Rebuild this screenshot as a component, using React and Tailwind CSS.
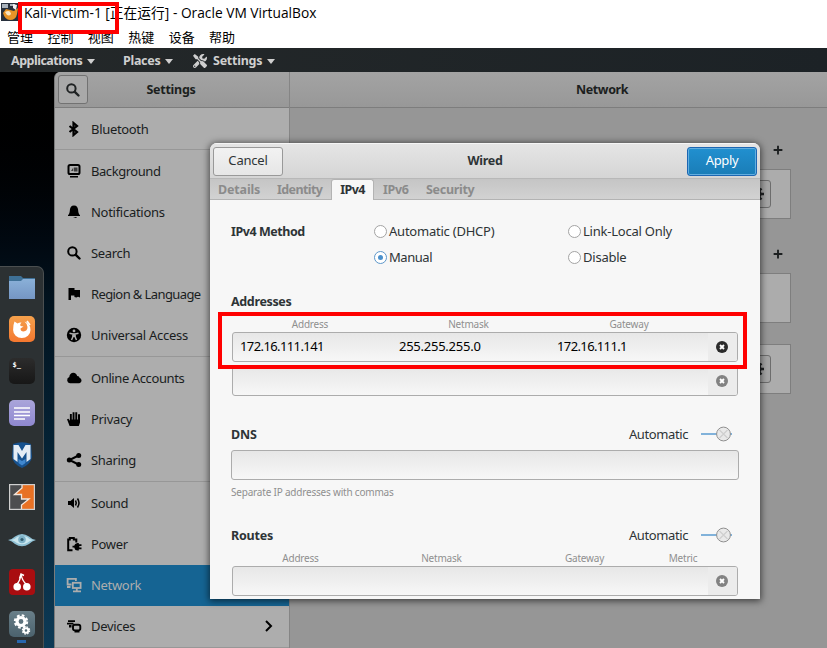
import React from "react";
import { FaTools } from "react-icons/fa";

const I = ({ children, size = "h-4 w-4" }) => (
  <svg viewBox="0 0 16 16" className={`${size} shrink-0`} fill="currentColor">{children}</svg>
);

const line = { fill: "none", stroke: "currentColor" };

const BluetoothIcon = () => <I><path {...line} strokeWidth="2.200" d="M3.500 5 11 11 7.500 14V2L11 5 3.500 11" /></I>;
const BackgroundIcon = () => (
  <I><rect {...line} strokeWidth="2" x="2.5" y="2" width="11" height="9" rx="1.6" /><path d="M5 8 7.3 4.5V8zM8 4.5h3.5V8.5H8z" opacity=".65" /><path d="M4 13h8v1.500H4z" /></I>
);
const BellIcon = () => <I><path d="M8 1.500c-2.7 0-3.9 2-4.1 4.3C3.7 8.5 3.4 10 2 11.3V12h12v-.7c-1.4-1.3-1.7-2.8-1.9-5.5C11.9 3.5 10.7 1.5 8 1.5zM7 13h4l-1 1z" /></I>;
const SearchIcon = () => <I><circle {...line} strokeWidth="2" cx="6.4" cy="6.4" r="4.2" /><path {...line} strokeWidth="2.4" strokeLinecap="round" d="m9.8 9.8 3.7 3.7" /></I>;
const FlagIcon = () => <I><path d="M2.5 2h6v2H14v7.5l-2-.7-1.6.7-2-.5V9.5H5V14H2.5z" /></I>;
const AccessIcon = () => (
  <I><circle cx="8" cy="8" r="7.2" /><circle cx="8" cy="3.9" r="1.4" fill="#adadad" /><path d="M3.500 6.200 8 7.200l4.500-1M7 7v2.500L5.500 13M9 7v2.500l1.500 3.500" fill="none" stroke="#adadad" strokeWidth="1.500" /><path d="M6.500 6.500h3v3.500h-3z" fill="#adadad" /></I>
);
const CloudIcon = () => <I><path d="M4 13.200a3.200 3.200 0 0 1-.7-6.200C3.400 4.400 5.200 2.800 7.300 2.800c2 0 3.500 1.300 3.900 3.200 1.500 0 2.300.9 2.400 2.100 1.200.3 1.900 1.300 1.900 2.500 0 1.500-1 2.600-2.500 2.600z" /></I>;
const HandIcon = () => <I><path d="M3.600 15 1 8.300l1.500-.6 1.400 2V3h1.900v5.500h.8V1.300h1.900v7.200h.8V1.300h1.900v7.200h.8V3.300H14V11.500L12.800 15z" /></I>;
const ShareIcon = () => <I><path {...line} strokeWidth="2" d="M12.500 3.500 3.500 8l9 4.500" /><circle cx="3.300" cy="8" r="2.500" /><circle cx="12.700" cy="3.500" r="2.500" /><circle cx="12.700" cy="12.500" r="2.500" /></I>;
const SoundIcon = () => <I><path d="M2 6h2.500L8 3v10L4.500 10H2z" /><path {...line} strokeWidth="1.500" d="M9.500 5.500q1.500 2.500 0 5M11.500 3.500q3 4.500 0 9" /></I>;
const PowerIcon = () => (
  <I><path {...line} strokeWidth="2" d="M6.500 14.200H2.200V3.500h1.600V2h4v1.500h2.500v3" /><path d="M15.500 8.300h-2.700V7H11.500Q8.500 7.500 8.200 9.800H6.500v1.700h1.700q.3 2.500 3.300 3h1.300v-1.300h2.700v-1.700h-2.200V10h2.200z" /></I>
);
const NetworkIcon = () => (
  <I><path {...line} strokeWidth="1.800" d="M5.500 7.500H1.600V1.800h8.300V4M1 10h3.500" /><rect {...line} strokeWidth="1.800" x="6.800" y="5.800" width="7.800" height="5.200" /><path {...line} strokeWidth="1.800" d="M10.800 11v3M7 14.300h8" /></I>
);
const DevicesIcon = () => (
  <I><path {...line} strokeWidth="1.800" d="M2 3.200h7M1 5.600h6.500" /><path d="M3 7h2.500v2.500H3z" /><rect {...line} strokeWidth="1.900" x="7" y="6.800" width="7.300" height="5.600" rx="1.800" /><path d="M8.500 13h5v1.500h-5z" /></I>
);

const groups = [
  { height: "h-[42px]", items: [["Bluetooth", BluetoothIcon]] },
  {
    height: "h-[207px]",
    items: [["Background", BackgroundIcon, "tracking-[-0.45px]"], ["Notifications", BellIcon, "tracking-[-0.28px]"], ["Search", SearchIcon], ["Region & Language", FlagIcon, "tracking-[-0.6px]"], ["Universal Access", AccessIcon, "tracking-[-0.25px]"]],
  },
  { height: "h-[125px]", items: [["Online Accounts", CloudIcon, "tracking-[-0.4px]"], ["Privacy", HandIcon], ["Sharing", ShareIcon]] },
  { height: "h-[166px]", items: [["Sound", SoundIcon, "tracking-[-0.4px]"], ["Power", PowerIcon], ["Network", NetworkIcon], ["Devices", DevicesIcon]] },
];

function Sidebar() {
  return (
    <div className="w-[235px] shrink-0 border-r border-[#858585] bg-[#adadad]">
      <div className="flex h-9 items-center border-b border-[#7d7d7d] bg-linear-to-b from-[#a3a3a3] to-[#989898] pl-[3px]">
        <div className="flex h-[29px] w-[30px] items-center justify-center rounded-[3px] border border-[#727272] bg-[#a9a9a9] text-[#202324]">
          <SearchIcon />
        </div>
        <div className="w-[166px] text-center text-[12.5px] font-bold tracking-[-0.25px]">Settings</div>
      </div>
      {groups.map((g, i) => (
        <div key={i} className={`flex flex-col border-b border-[#979797] ${g.height}`}>
          {g.items.map(([name, Icon, tracking = "tracking-[-0.32px]"]) => (
            <div
              key={name}
              className={`flex flex-1 items-center pl-[11px] ${name === "Network" ? "bg-[#156493] text-[#adadad]" : "text-black"}`}
            >
              <Icon />
              <span className={`ml-[9px] flex-1 whitespace-nowrap ${tracking} ${name === "Network" ? "" : "text-[#1a1d1e]"}`}>{name}</span>
              {name === "Devices" && (
                <svg viewBox="0 0 10 12" className="mr-[15px] h-3 w-[10px]" fill="none" stroke="currentColor" strokeWidth="2"><path d="m2 1 5 5-5 5" /></svg>
              )}
            </div>
          ))}
        </div>
      ))}
    </div>
  );
}

const GearButton = () => (
  <div className="flex h-7 w-[30px] items-center justify-center rounded-[3px] border border-[#6d6d6d] bg-[#a5a5a5] text-[#202324]">
    <I><circle {...line} cx="8" cy="8" r="4" strokeWidth="3" /><path {...line} strokeWidth="2.400" d="M8 0v4M8 12v4M0 8h4M12 8h4M2.500 2.500l2.500 2.500M11 11l2.500 2.500M13.500 2.500l-2.500 2.500M5 11l-2.500 2.500" /></I>
  </div>
);

const Plus = ({ className }) => (
  <div className={`flex h-5 items-center justify-end pr-2 text-[#1c1f20] ${className}`}>
    <I size="h-[10px] w-[10px]"><path {...line} strokeWidth="3" d="M8 1v14M1 8h14" /></I>
  </div>
);

const Card = ({ className, gear }) => (
  <div className={`flex items-center justify-end border border-[#7e7e7e] bg-[#acacac] pr-[19px] ${className}`}>{gear && <GearButton />}</div>
);

function NetworkPage() {
  return (
    <div className="flex-1 bg-[#969696]">
      <div className="flex h-9 items-center border-b border-[#7d7d7d] bg-linear-to-b from-[#a3a3a3] to-[#989898] pl-[286px] text-[12.5px] font-bold tracking-[-0.4px]">Network</div>
      <div className="flex flex-col pr-[36px] pl-[35px]">
        <Plus className="mt-8" />
        <Card className="mt-[9px] h-[50px]" gear />
        <Plus className="mt-[25px]" />
        <Card className="mt-[9px] h-[50px]" />
        <Card className="mt-[21px] h-[50px]" gear />
      </div>
    </div>
  );
}

const S = ({ children }) => <svg viewBox="0 0 26 26" className="h-[26px] w-[26px] shrink-0">{children}</svg>;

function Dock() {
  return (
    <div className="mt-[194px] flex h-[382px] w-11 flex-col items-center gap-[16.1px] rounded-tr-[7px] border-t border-r border-[#4b4f50] bg-[#2c3133] pt-[7px]">
      <S>
        <path d="M0 2h12l2 2h12v6H0z" fill="#3e7096" />
        <path d="M0 7h12l2-2h12v20H0z" fill="url(#folder)" />
        <defs>
          <linearGradient id="folder" x2="0" y2="1"><stop stopColor="#8ab0d8" /><stop offset="1" stopColor="#7596c4" /></linearGradient>
          <linearGradient id="fox" x2="0" y2="1"><stop stopColor="#f5a14c" /><stop offset="1" stopColor="#f4772f" /></linearGradient>
          <linearGradient id="gear" x2="0" y2="1"><stop stopColor="#697f89" /><stop offset="1" stopColor="#4b626d" /></linearGradient>
          <linearGradient id="note" x2="0" y2="1"><stop stopColor="#aaa5da" /><stop offset="1" stopColor="#8f88d0" /></linearGradient>
        </defs>
      </S>
      <S>
        <rect width="26" height="26" rx="5" fill="url(#fox)" />
        <path d="M5.500 5.500 8.500 7.500q2-1.500 4-1-2 1.500-1 3.500l3 .5-3 2q0 3 3 3 4-.5 4-4.500 0-3-3-5.500 6 2 6 8.500a8.700 8 0 0 1-17.400 0Q4 9 5.500 5.500z" fill="#fff" />
        <path d="m18 5 3 4" stroke="#fff" strokeWidth="1.500" />
      </S>
      <div className="h-[26px] w-[26px] shrink-0 rounded-[5px] bg-linear-to-b from-[#2c2c2c] to-[#171717] pl-[4px] font-['DejaVu_Sans_Mono',monospace] text-[7px] leading-[14px] font-bold text-white">$_</div>
      <S>
        <rect width="26" height="26" rx="5" fill="url(#note)" />
        <path d="M5 8h16M5 12h16M5 15.500h16M5 19h11" stroke="#fff" strokeWidth="1.700" />
      </S>
      <S>
        <path d="M4 2q9-3.500 18 0l1 13q-1 7-10 11Q4 22 3 15z" fill="#17528f" />
        <path d="M4.500 3h5l3.500 6 3.500-6h5v14l-4 3V10l-4.500 6.500L8.500 10v10l-4-3z" fill="#e4ecf5" />
        <path d="m9.500 17 3.500 2 3.500-2v4L13 23.500 9.500 21z" fill="#4088d0" />
      </S>
      <S>
        <rect width="26" height="26" fill="#e87124" />
        <path d="M0 0h13v4l-7.500 6.500h7V15H20l-7.500 6v5H0z" fill="#4c4d4f" />
        <path d="M13 0v4l-7.500 6.500h7V15H20l-7.500 6v5" stroke="#f3e6dc" strokeWidth="1.300" fill="none" />
        <rect x=".6" y=".6" width="24.800" height="24.800" fill="none" stroke="#d0d0d0" strokeWidth="1.200" />
      </S>
      <svg viewBox="0 0 28 26" className="h-[26px] w-7 shrink-0">
        <path d="M0 13q4-.5 7-3.500 7-5 14 0 3 3 7 3.500-4 1-7 4-7 4.500-14 0-3-3-7-4z" fill="#8fc0d4" />
        <path d="M3 13q4-.5 6-3 5-2 10 0 2 2.500 6 3-4 1-6 3-5 2.500-10 0-2-2-6-3z" fill="#c9e6ee" />
        <circle cx="14" cy="12.500" r="3.800" fill="#7fb2c8" /><circle cx="14" cy="12.500" r="1.600" fill="#315d70" />
      </svg>
      <S>
        <rect width="26" height="26" rx="4" fill="#a90d10" />
        <path d="M7.500 15.500q4-4 4.500-10.500 1 7 6 11M10.500 9.500 12 5l3 1.500" fill="none" stroke="#fff" strokeWidth="1.400" />
        <circle cx="8.200" cy="17.800" r="3.800" fill="#fff" /><circle cx="17.800" cy="17.800" r="3.800" fill="#fff" />
      </S>
      <div className="flex flex-col items-center gap-[3px]">
        <S>
          <rect width="26" height="26" rx="5" fill="url(#gear)" />
          <circle cx="12" cy="10.500" r="4" fill="none" stroke="#fff" strokeWidth="3.200" />
          <circle cx="12" cy="10.500" r="6.200" fill="none" stroke="#fff" strokeWidth="2" strokeDasharray="2.700 2.170" />
          <circle cx="17" cy="19.500" r="2.300" fill="none" stroke="#fff" strokeWidth="2" />
          <circle cx="17" cy="19.500" r="3.600" fill="none" stroke="#fff" strokeWidth="1.300" strokeDasharray="1.600 1.230" />
        </S>
        <div className="h-[3px] w-[9px] shrink-0 bg-[#2866ad]" />
      </div>
    </div>
  );
}

const Radio = ({ label, checked, className = "", tracking = "tracking-[-0.23px]" }) => (
  <div className={`flex items-center gap-[2px] ${className}`}>
    <span className={`flex h-[13px] w-[13px] items-center justify-center rounded-full border bg-white ${checked ? "border-[#5d97ca]" : "border-[#a3a3a3]"}`}>
      {checked && <span className="h-[5px] w-[5px] rounded-full bg-[#4a90cc]" />}
    </span>
    <span className={tracking}>{label}</span>
  </div>
);

const Remove = ({ active }) => (
  <div className={`flex w-[29px] shrink-0 items-center justify-center rounded-r-[2px] bg-[#ececec] pr-px ${active ? "text-[#2b2b2b]" : "text-[#828282]"}`}>
    <svg viewBox="0 0 12 12" className="h-3 w-3"><circle cx="6" cy="6" r="6" fill="currentColor" /><path d="m4 4 4 4M8 4 4 8" stroke="#fff" strokeWidth="1.900" /></svg>
  </div>
);

const AddressRow = ({ values = [], active, className = "" }) => (
  <div className={`ml-px flex h-[30px] w-[506px] rounded-[3px] border border-[#acacac] bg-linear-to-b from-[#e7e7e7] to-[#f7f7f7] text-black ${className}`}>
    <div className="grid flex-1 grid-cols-[159px_158px_1fr] items-center pb-0.5 pl-[7px]">
      {values.map(([v, tracking]) => <span key={v} className={tracking}>{v}</span>)}
    </div>
    <Remove active={active} />
  </div>
);

const SectionHead = ({ title, className }) => (
  <div className={`flex h-6 w-[508px] items-center ${className}`}>
    <span className="flex-1 pt-0.5 text-[12.5px] font-bold tracking-[-0.2px]">{title}</span>
    <span className="mr-[12px] tracking-[-0.4px]">Automatic</span>
    <svg viewBox="0 0 32 16" className="mr-[7px] h-4 w-8">
      <path d="M1 8h31" stroke="#5a9bd0" strokeWidth="1.500" />
      <circle cx="23.500" cy="8" r="6.900" fill="#e9e9e9" stroke="#909090" />
      <path d="m19.500 4 8 8M27.500 4l-8 8" stroke="#cfcfcf" strokeWidth="1.300" />
    </svg>
  </div>
);

const tabs = [
  ["Details", "w-[59px] tracking-[-0.15px]"],
  ["Identity", "w-[54px] tracking-[-0.6px]"],
  ["IPv4", "w-[43px] tracking-[-0.6px]"],
  ["IPv6", "w-[43px] pl-[9px] tracking-[-0.35px]"],
  ["Security", "flex-1 pl-[9px] tracking-[-0.3px]"],
];

function WiredDialog() {
  return (
    <div className="absolute top-[143px] left-[210px] flex h-[456px] w-[550px] flex-col overflow-hidden rounded-t-[7px] bg-[#f7f7f7] text-[#2e3436] shadow-[0_1px_7px_1px_rgba(0,0,0,0.6)]">
      <div className="flex h-[35px] items-center justify-between border-t border-[#f5f5f5] bg-linear-to-b from-[#e5e5e5] to-[#d5d5d5] px-[3px]">
        <div className="flex h-[29px] w-[70px] items-center justify-center rounded-[3px] border border-[#999] bg-linear-to-b from-[#f2f2f2] to-[#e6e6e6] pb-0.5 tracking-[-0.2px]">Cancel</div>
        <div className="text-[12.5px] font-bold tracking-[-0.3px]">Wired</div>
        <div className="flex h-[29px] w-[70px] items-center justify-center rounded-[3px] border border-[#1c66b2] bg-linear-to-b from-[#2190d0] to-[#1a7db7] pb-0.5 tracking-[-0.4px] text-white shadow-[inset_0_0_0_1px_#62aee0]">Apply</div>
      </div>
      <div className="flex h-[22px] items-end border-t border-b border-t-[#b8b8b8] border-b-[#b3b3b3] bg-linear-to-b from-[#c5c5c5] to-[#d2d2d2] pl-2 text-[12.5px] font-bold text-[#8b8b8b]">
        {tabs.map(([t, w]) => (
          <div
            key={t}
            className={`flex shrink-0 items-center ${w} ${t === "IPv4" ? "-mb-px h-[21px] justify-center rounded-t-[3px] border border-b-0 border-[#b3b3b3] bg-[#f7f7f7] text-[#2e3436]" : "h-5 pt-0.5"}`}
          >
            {t}
          </div>
        ))}
      </div>
      <div className="flex flex-col pt-[18px] pl-[21px]">
        <div className="grid grid-cols-[143px_194px_1fr] grid-rows-[26px_26px] items-center">
          <span className="pt-0.5 text-[12.5px] font-bold tracking-[-0.45px]">IPv4 Method</span>
          <Radio label="Automatic (DHCP)" />
          <Radio label="Link-Local Only" />
          <Radio label="Manual" checked className="col-start-2" tracking="tracking-[-0.45px]" />
          <Radio label="Disable" />
        </div>
        <div className="mt-[21px] h-[22px] text-[12.5px] leading-[22px] font-bold tracking-[-0.35px]">Addresses</div>
        <div className="mt-[2px] mb-px grid h-4 grid-cols-[158px_159px_162px] items-center text-center text-[10px] tracking-[-0.2px] text-[#8f8f8f]">
          <span>Address</span><span>Netmask</span><span>Gateway</span>
        </div>
        <AddressRow
          values={[["172.16.111.141", "tracking-[-0.6px]"], ["255.255.255.0", "tracking-[-0.25px]"], ["172.16.111.1", "tracking-[-0.62px]"]]}
          active
        />
        <AddressRow className="mt-1" />
        <SectionHead title="DNS" className="mt-[26px]" />
        <div className="mt-1 h-[30px] w-[508px] rounded-[3px] border border-[#acacac] bg-linear-to-b from-[#e7e7e7] to-[#f7f7f7]" />
        <div className="mt-1 h-4 text-[10px] leading-4 tracking-[-0.2px] text-[#8f8f8f]">Separate IP addresses with commas</div>
        <SectionHead title="Routes" className="mt-[23px]" />
        <div className="mt-[2px] mb-px grid h-4 grid-cols-[139px_143px_143px_54px] items-center text-center text-[10px] tracking-[-0.2px] text-[#8f8f8f]">
          <span>Address</span><span>Netmask</span><span>Gateway</span><span>Metric</span>
        </div>
        <AddressRow />
      </div>
    </div>
  );
}

const Caret = () => <span className="ml-[5px] border-x-[4px] border-t-[5px] border-x-transparent border-t-[#cfcfcf]" />;

export default function App() {
  return (
    <div className="relative flex h-[648px] w-[827px] flex-col overflow-hidden bg-white font-['Noto_Sans','Noto_Sans_CJK_SC',sans-serif] text-[13px] leading-[18px] text-[#1c1f20]">
      <div className="flex h-[26px] items-center pl-px font-['Open_Sans','Noto_Sans_CJK_SC',sans-serif] text-[13.75px] text-black">
        <svg viewBox="0 0 18 18" className="mb-0.5 h-[18px] w-[18px]">
          <rect width="18" height="18" fill="#28303c" />
          <path d="M1 1h6v4H1zM9 1h5v2H9z" fill="#aab3bc" />
          <path d="M2 10q2 7 7 7 6 0 7-6l1-6-4 3-4-1-4-1z" fill="#e89427" />
          <path d="M4 9q5-3 6 2-3 4-6-2z" fill="#f9e5c1" /><path d="m12 1 4 1-1 5-3-2z" fill="#f1f1f1" />
        </svg>
        <span className="ml-[5px] whitespace-nowrap">Kali-victim-1 [正在运行] - Oracle VM VirtualBox</span>
      </div>
      <div className="flex h-[22px] items-center gap-[14.4px] pb-px pl-[7px] font-['Noto_Sans_CJK_SC',sans-serif] text-[13px] text-black">
        {["管理", "控制", "视图", "热键", "设备", "帮助"].map((m) => <span key={m}>{m}</span>)}
      </div>
      <div className="flex h-6 items-center bg-linear-to-r from-[#242829] to-[#1c2226] pt-0.5 pl-[11px] text-[12.5px] font-bold text-[#cfcfcf]">
        <div className="flex w-[112px] items-center tracking-[-0.5px]">Applications<Caret /></div>
        <div className="flex w-[70px] items-center tracking-[-0.3px]">Places<Caret /></div>
        <div className="flex items-center tracking-[-0.25px]"><FaTools className="mr-[6px] h-[14px] w-[14px]" />Settings<Caret /></div>
      </div>
      <div className="flex h-[576px] bg-linear-to-b from-[#000] via-[#02131f] via-40% to-[#0d3a56]">
        <div className="w-[54px] shrink-0"><Dock /></div>
        <div className="flex flex-1 overflow-hidden rounded-tl-[6px] border-l border-[#7b7b7b]">
          <Sidebar />
          <NetworkPage />
        </div>
      </div>
      <WiredDialog />
      <div className="absolute top-[2px] left-[18px] h-8 w-[101px] border-4 border-[#f00]" />
      <div className="absolute top-[312px] left-[218px] h-[57px] w-[529px] border-4 border-[#f00]" />
    </div>
  );
}
